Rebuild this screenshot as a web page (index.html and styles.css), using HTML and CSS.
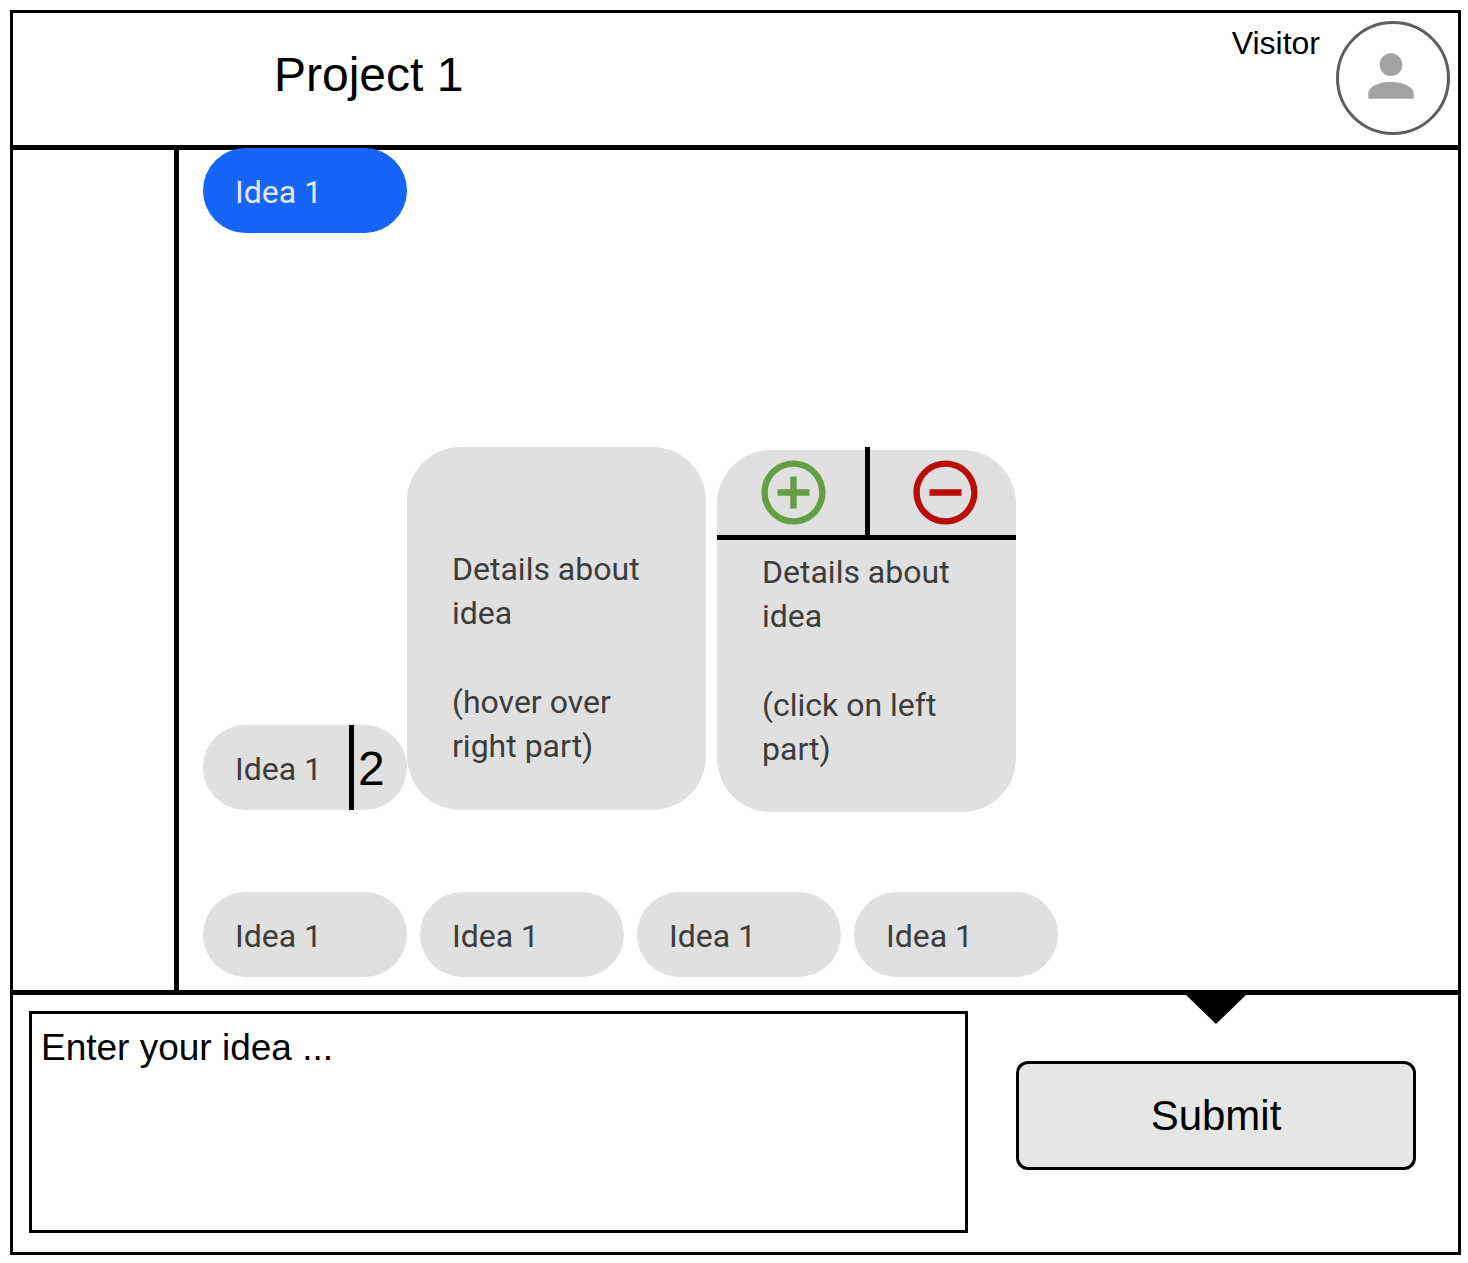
FILE: index.html
```html
<!DOCTYPE html>
<html lang="en">
<head>
  <meta charset="utf-8">
  <meta name="viewport" content="width=device-width, initial-scale=1">
  <title>Project 1</title>
  <link rel="stylesheet" href="styles.css">
</head>
<body>
  <div class="frame">
    <header class="header">
      <h1 class="title">Project 1</h1>
      <div class="account">
        <span class="account-name">Visitor</span>
        <button class="avatar" type="button" aria-label="Account">
          <svg class="avatar-icon" viewBox="0 0 24 24" aria-hidden="true"><path d="M12 12c2.210 0 4-1.790 4-4s-1.790-4-4-4-4 1.790-4 4 1.790 4 4 4zm0 2c-2.670 0-8 1.340-8 4v2h16v-2c0-2.660-5.330-4-8-4z"/></svg>
        </button>
      </div>
    </header>

    <main class="main">
      <aside class="sidebar"></aside>
      <section class="board">
        <button class="pill pill-active" type="button">Idea 1</button>

        <div class="open-row">
          <div class="hover-group">
            <div class="pill pill-split">
              <button class="pill-label" type="button">Idea 1</button>
              <button class="pill-count" type="button">2</button>
            </div>
            <article class="card card-hover">
              <p>Details about idea</p>
              <p>(hover over right part)</p>
            </article>
          </div>
          <article class="card card-click">
            <div class="votes">
              <button class="vote vote-up" type="button" aria-label="Vote up">
                <svg class="vote-icon" viewBox="0 0 24 24" aria-hidden="true"><path d="M13 7h-2v4H7v2h4v4h2v-4h4v-2h-4V7zm-1-5C6.480 2 2 6.480 2 12s4.480 10 10 10 10-4.480 10-10S17.520 2 12 2zm0 18c-4.410 0-8-3.590-8-8s3.590-8 8-8 8 3.590 8 8-3.590 8-8 8z"/></svg>
              </button>
              <span class="vote-divider"></span>
              <button class="vote vote-down" type="button" aria-label="Vote down">
                <svg class="vote-icon" viewBox="0 0 24 24" aria-hidden="true"><path d="M7 11v2h10v-2H7zm5-9C6.480 2 2 6.480 2 12s4.480 10 10 10 10-4.480 10-10S17.520 2 12 2zm0 18c-4.410 0-8-3.590-8-8s3.590-8 8-8 8 3.590 8 8-3.590 8-8 8z"/></svg>
              </button>
            </div>
            <div class="card-text">
              <p>Details about idea</p>
              <p>(click on left part)</p>
            </div>
          </article>
        </div>

        <div class="pill-row">
          <button class="pill" type="button">Idea 1</button>
          <button class="pill" type="button">Idea 1</button>
          <button class="pill" type="button">Idea 1</button>
          <button class="pill" type="button">Idea 1</button>
        </div>
      </section>
    </main>

    <form class="composer">
      <textarea class="idea-input" aria-label="Your idea" placeholder="Enter your idea ..."></textarea>
      <div class="actions">
        <svg class="marker" viewBox="0 0 60 29" aria-hidden="true"><path d="M0 0h60L30 29z"/></svg>
        <button class="submit" type="button">Submit</button>
      </div>
    </form>
  </div>
</body>
</html>
```

FILE: styles.css
```css
* {
  box-sizing: border-box;
}

body {
  margin: 0;
  padding: 10px 7px 8px 10px;
  min-height: 100vh;
  display: flex;
  background: #fff;
  color: #000;
  font-family: "Liberation Sans", Arial, sans-serif;
}

button {
  margin: 0;
  padding: 0;
  border: 0;
  background: none;
  color: inherit;
  font: inherit;
  cursor: pointer;
}

h1,
p {
  margin: 0;
}

.frame {
  flex: 1;
  display: flex;
  flex-direction: column;
  border: 3px solid #000;
}

/* Header */
.header {
  display: flex;
  justify-content: space-between;
  align-items: flex-start;
  padding: 8px 8px 10px 261px;
  border-bottom: 5px solid #000;
}

.title {
  margin-top: 26px;
  font-size: 48px;
  line-height: 56px;
  font-weight: 400;
}

.account {
  display: flex;
  gap: 16px;
}

.account-name {
  padding-top: 2px;
  font-size: 32px;
  line-height: 40px;
}

.avatar {
  display: flex;
  align-items: center;
  justify-content: center;
  width: 114px;
  height: 114px;
  padding: 0 5px 5px 0;
  border: 3px solid #5e5e5e;
  border-radius: 50%;
}

.avatar-icon {
  width: 68px;
  height: 68px;
  fill: #a2a2a2;
}

/* Board */
.main {
  flex: 1;
  display: flex;
}

.sidebar {
  width: 166px;
  border-right: 5px solid #000;
}

.board {
  flex: 1;
  display: flex;
  flex-direction: column;
  align-items: flex-start;
  padding: 0 24px 13px;
  color: #3c3c3c;
  font-family: Roboto, sans-serif;
  font-size: 32px;
}

.pill {
  width: 204px;
  height: 85px;
  padding: 2px 32px 0;
  border-radius: 43px;
  background: #e0e0e0;
  text-align: left;
}

.pill-active {
  margin-top: -2px;
  background: #1565f8;
  color: #e6e6e6;
}

.open-row {
  display: flex;
  align-items: flex-start;
  gap: 11px;
  margin: auto 0 80px;
}

.hover-group {
  display: flex;
  align-items: flex-end;
}

.pill-split {
  display: flex;
  padding: 0;
  overflow: hidden;
}

.pill-label {
  width: 151px;
  padding: 2px 0 0 32px;
  border-right: 5px solid #000;
  text-align: left;
}

.pill-count {
  flex: 1;
  padding: 2px 0 0 4px;
  color: #000;
  font-family: "Liberation Sans", Arial, sans-serif;
  font-size: 48px;
  text-align: left;
}

.card {
  width: 299px;
  border-radius: 54px;
  background: #e0e0e0;
  line-height: 44px;
}

.card p + p {
  margin-top: 45px;
}

.card-hover {
  padding: 100px 45px 42px;
}

.card-click {
  margin-top: 3px;
}

.votes {
  display: grid;
  grid-template-columns: 148px 5px 1fr;
  height: 90px;
  border-bottom: 5px solid #000;
}

.vote {
  display: flex;
  align-items: center;
  justify-content: center;
  padding-left: 4px;
}

.vote-icon {
  width: 77px;
  height: 77px;
  fill: currentColor;
}

.vote-up {
  color: #649f46;
}

.vote-down {
  color: #b90e0a;
}

.vote-divider {
  margin-top: -3px;
  background: #000;
}

.card-text {
  padding: 10px 45px 41px;
}

.pill-row {
  display: flex;
  gap: 13px;
}

/* Composer */
.composer {
  display: grid;
  grid-template-columns: 939fr 490fr;
  border-top: 5px solid #000;
  padding-left: 16px;
}

.idea-input {
  height: 222px;
  margin: 16px 0 19px;
  padding: 12px 9px;
  border: 3px solid #000;
  border-radius: 0;
  background: #fff;
  color: #000;
  font-family: inherit;
  font-size: 37px;
  line-height: 44px;
  resize: none;
}

.idea-input::placeholder {
  color: #000;
  opacity: 1;
}

.actions {
  display: flex;
  flex-direction: column;
  align-items: center;
  gap: 37px;
  padding: 0 42px 0 48px;
}

.marker {
  width: 60px;
  height: 29px;
}

.submit {
  width: 100%;
  height: 109px;
  border: 3px solid #000;
  border-radius: 12px;
  background: #e6e6e6;
  font-size: 42px;
}
```
